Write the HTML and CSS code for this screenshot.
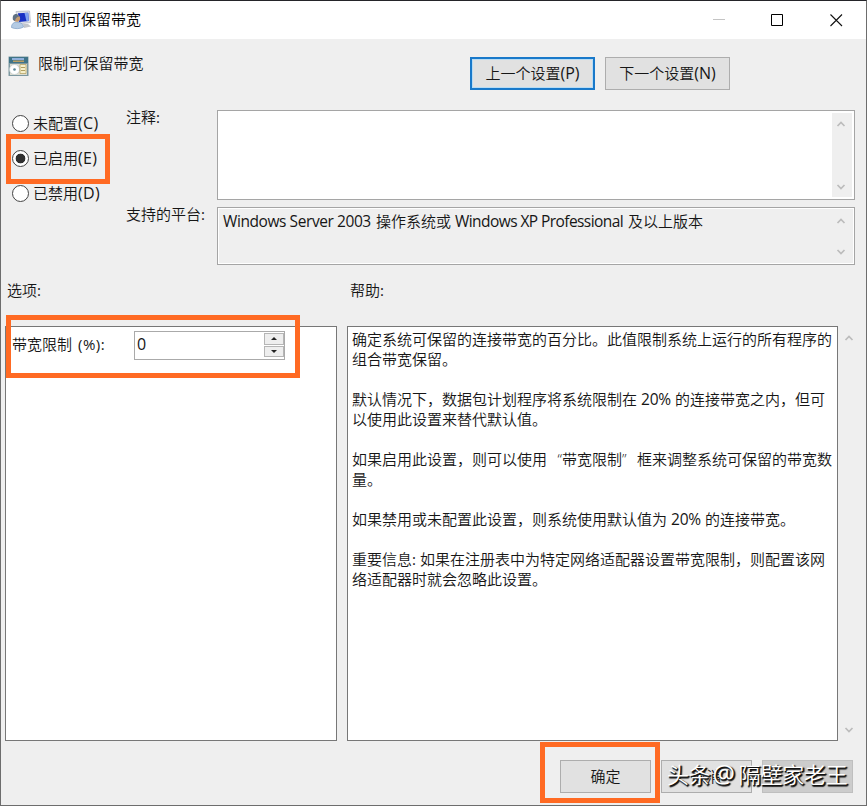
FILE: index.html
```html
<!DOCTYPE html>
<html lang="zh-CN">
<head>
<meta charset="utf-8">
<title>限制可保留带宽</title>
<link rel="stylesheet" href="styles.css">
</head>
<body>
<div class="window">
  <header class="titlebar">
    <svg class="app-icon" width="22" height="20" viewBox="0 0 22 20">
      <path d="M5 1.500 18.500 1 19.500 12.500 7 14Z" fill="#dcdfe6" stroke="#b4bac8" stroke-width=".8"/>
      <path d="M7 3.200 17.200 2.700 17.800 11 8 12Z" fill="#1830c4"/>
      <path d="M13.500 2.900 17.200 2.700 17.800 11 15.500 11.200Z" fill="#7fa2f0"/>
      <path d="M12 14h5l3 2.500-7 1.500Z" fill="#c2c5cb"/>
      <path d="M.5 17.500c0-4 2.500-5.500 5.500-5.500s6 1.500 6.500 5c-3 2-9 2.200-12 .5Z" fill="#b4cbe4" stroke="#7f9fc6" stroke-width=".7"/>
      <circle cx="5.800" cy="8.500" r="3.300" fill="#c49a70"/>
      <path d="M2 10C1 5.500 3 3.500 6 4l2.500 2.500C6 6.500 4.500 8 4 11Z" fill="#5f7183"/>
    </svg>
    <span class="title">限制可保留带宽</span>
    <svg class="controls" width="134" height="14" viewBox="0 0 134 14">
      <path d="M0 6.500h12" stroke="#c4c4c4" fill="none"/>
      <path d="M58.500 1.500h11v11h-11z" stroke="#000" fill="none"/>
      <path d="M117.500 1.500l11.500 11.500M129 1.500l-11.500 11.500" stroke="#111" stroke-width="1.100" fill="none"/>
    </svg>
  </header>

  <section class="heading">
    <svg class="policy-icon" width="21" height="21" viewBox="0 0 21 21">
      <path d="M.5.500h20v19.500H.5z" fill="#7c98a0"/>
      <path d="M1 1h19v6H1z" fill="#3f7488"/>
      <path d="M4 2h12v2H4z" fill="#8fb0dc"/><path d="M5 4.500h11v1.500H5z" fill="#b99e64"/>
      <path d="M2 8h17v11H2z" fill="#dcdcd0"/>
      <circle cx="6.500" cy="13.500" r="5" fill="#fff" stroke="#c4cccc" stroke-width=".7"/>
      <circle cx="6.500" cy="13.500" r="1.300" fill="#5a8796"/>
      <path d="M12 8.500h6v9h-6z" fill="#f5efcb" stroke="#b8a668" stroke-width=".8"/>
      <path d="M13 11.500h4M13 14.500h4" stroke="#a89554" stroke-width=".9"/>
    </svg>
    <span class="policy-name">限制可保留带宽</span>
    <div class="nav">
      <button class="btn nav-btn focused">上一个设置<span class="lat">(P)</span></button>
      <button class="btn nav-btn">下一个设置<span class="lat">(N)</span></button>
    </div>
  </section>

  <section class="settings">
    <div class="radios">
      <label class="radio"><i class="dot"></i>未配置<span class="lat">(C)</span></label>
      <label class="radio"><i class="dot on"></i>已启用<span class="lat">(E)</span></label>
      <label class="radio"><i class="dot"></i>已禁用<span class="lat">(D)</span></label>
    </div>
    <div class="captions">
      <span>注释<span class="lat">:</span></span>
      <span class="platform-caption">支持的平台<span class="lat">:</span></span>
    </div>
    <div class="fields">
      <div class="field comment">
        <div class="field-scroll">
          <svg width="10" height="6" viewBox="0 0 10 6"><path d="M1.500 5 5 1.500 8.500 5"/></svg>
          <svg width="10" height="6" viewBox="0 0 10 6"><path d="M1.500 1 5 4.500 8.500 1"/></svg>
        </div>
      </div>
      <div class="field platform">
        <p class="platform-text"><span class="w1">Windows Server 2003</span><span class="cj">操作系统或</span><span class="w2">Windows XP Professional</span><span>及以上版本</span></p>
        <div class="field-scroll">
          <svg width="10" height="6" viewBox="0 0 10 6"><path d="M1.500 5 5 1.500 8.500 5"/></svg>
          <svg width="10" height="6" viewBox="0 0 10 6"><path d="M1.500 1 5 4.500 8.500 1"/></svg>
        </div>
      </div>
    </div>
  </section>

  <section class="panel-labels">
    <span>选项<span class="lat">:</span></span>
    <span>帮助<span class="lat">:</span></span>
  </section>

  <section class="panels">
    <div class="panel options">
      <span class="option-label">带宽限制<span class="lat pct">(%):</span></span>
      <div class="spinner">
        <span class="lat value">0</span>
        <div class="steps">
          <i><svg width="6" height="3" viewBox="0 0 6 3"><path d="M0 3 3 0 6 3Z"/></svg></i>
          <i><svg width="6" height="3" viewBox="0 0 6 3"><path d="M0 0 3 3 6 0Z"/></svg></i>
        </div>
      </div>
    </div>
    <div class="panel help">
      <p>确定系统可保留的连接带宽的百分比。此值限制系统上运行的所有程序的<br>组合带宽保留。</p>
      <p>默认情况下，数据包计划程序将系统限制在<span class="lat num">20%</span>的连接带宽之内，但可<br>以使用此设置来替代默认值。</p>
      <p>如果启用此设置，则可以使用<span class="q open">“</span>带宽限制<span class="q">”</span>框来调整系统可保留的带宽数<br>量。</p>
      <p>如果禁用或未配置此设置，则系统使用默认值为<span class="lat num">20%</span>的连接带宽。</p>
      <p>重要信息<span class="colon lat">:</span>如果在注册表中为特定网络适配器设置带宽限制，则配置该网<br>络适配器时就会忽略此设置。</p>
    </div>
    <div class="help-scroll">
      <svg width="10" height="6" viewBox="0 0 10 6"><path d="M1.500 5 5 1.500 8.500 5"/></svg>
      <svg width="10" height="6" viewBox="0 0 10 6"><path d="M1.500 1 5 4.500 8.500 1"/></svg>
    </div>
  </section>

  <footer class="footer">
    <button class="btn action">确定</button>
    <button class="btn action">取消</button>
    <button class="btn action disabled"></button>
  </footer>

  <div class="mark mark-radio"></div>
  <div class="mark mark-option"></div>
  <div class="mark mark-ok"></div>
  <div class="watermark"><span>头条</span><span class="at">@</span><span>隔壁家老王</span></div>
</div>
</body>
</html>
```
FILE: styles.css
```css
* { box-sizing: border-box; }
body {
  margin: 0;
  font-family: "Noto Sans CJK SC", sans-serif;
  font-size: 15px;
  line-height: 20px;
  font-weight: 350;
  color: #161616;
}
p { margin: 0; }
.lat { font-family: "Open Sans", "Noto Sans", sans-serif; font-weight: 400; }
.window {
  position: relative;
  width: 867px;
  height: 806px;
  display: flex;
  flex-direction: column;
  overflow: hidden;
  white-space: nowrap;
  background: #efefef;
  border: 1px solid #6d6d6d;
  border-top-color: #242429;
}
.titlebar {
  height: 38px;
  flex: none;
  display: flex;
  align-items: center;
  padding: 0 19px 0 10px;
  background: #fff;
}
.title { margin: -2px 0 0 3px; color: #000; }
.controls { margin-left: auto; }
.heading {
  height: 71px;
  flex: none;
  display: flex;
  align-items: flex-start;
  padding: 17px 0 0 7px;
}
.policy-name { margin: -3px 0 0 9px; letter-spacing: .1px; }
.nav { display: flex; gap: 10px; margin: 1px 0 0 auto; padding-right: 136px; }
.btn {
  font: inherit;
  color: inherit;
  padding: 0 0 2px;
  background: #e1e1e1;
  border: 1px solid #adadad;
}
.nav-btn { width: 125px; height: 33px; }
.nav-btn .lat { font-size: 16px; line-height: 18px; }
.focused { border: 2px solid #1979ca; box-shadow: inset 0 0 0 1px #b8dcf4; }
.settings { height: 155px; flex: none; display: flex; }
.radios { width: 125px; padding: 3px 0 0 11px; }
.radio { display: flex; align-items: center; height: 20px; margin-bottom: 15px; }
.radio .lat { font-size: 16px; letter-spacing: .3px; }
.dot {
  width: 17px;
  height: 17px;
  margin-right: 4px;
  border: 1px solid #444;
  border-radius: 50%;
  background: #fff;
}
.dot.on { background: radial-gradient(circle, #303030 0 4.500px, #fff 5.200px); }
.captions { width: 91px; display: flex; flex-direction: column; }
.captions > span { margin-top: -3px; }
.captions > .platform-caption { margin-top: 77px; }
.fields { width: 638px; display: flex; flex-direction: column; gap: 7px; }
.field {
  display: flex;
  border: 1px solid #a5a5a5;
  background: #fff;
  padding: 2px;
}
.comment { height: 90px; }
.platform { height: 58px; background: #efefef; box-shadow: inset 0 0 0 1px #fff; }
.platform-text { display: flex; padding: 1px 0 0 3px; }
.platform-text .w1, .platform-text .w2 {
  font-family: "Open Sans", sans-serif;
  font-size: 15.500px;
  font-weight: 400;
}
.w1 { width: 153px; letter-spacing: -.42px; }
.cj { width: 79px; }
.w2 { width: 173px; letter-spacing: -.57px; }
.field-scroll {
  width: 20px;
  margin-left: auto;
  display: flex;
  flex-direction: column;
  justify-content: space-between;
  align-items: center;
  padding: 8px 2px 7px 0;
  background: #efefef;
}
.field-scroll path, .help-scroll path { fill: none; stroke: #bcbcbc; stroke-width: 1.700; }
.panel-labels {
  height: 61px;
  flex: none;
  display: grid;
  grid-template-columns: 343px 1fr;
  padding: 15px 0 0 6px;
}
.panels { height: 415px; flex: none; display: flex; padding-left: 4px; }
.panel { background: #fff; border: 1px solid #777; }
.options {
  width: 332px;
  margin-right: 10px;
  display: flex;
  align-items: flex-start;
  padding: 4px 0 0 6px;
}
.option-label { width: 122px; padding-top: 3px; }
.pct { margin-left: 6px; letter-spacing: .5px; }
.spinner {
  width: 151px;
  height: 29px;
  display: flex;
  justify-content: space-between;
  border: 1px solid #aaa;
  padding: 1px 0 2px 2px;
}
.value { padding-top: 1px; font-size: 16px; }
.steps { width: 20px; display: flex; flex-direction: column; gap: 1px; }
.steps i {
  flex: 1;
  display: flex;
  align-items: center;
  justify-content: center;
  border: 1px solid #b5b5b5;
  background: #eee;
}
.steps path { fill: #222; }
.help { width: 491px; padding: 2px 0 0 4px; }
.help p { margin-bottom: 20px; }
.num {
  display: inline-block;
  width: 38px;
  height: 20px;
  vertical-align: top;
  text-align: center;
  font-size: 15.500px;
  letter-spacing: -.2px;
}
.colon { margin-right: 4px; }
.q { display: inline-block; width: 15px; font-family: "Open Sans", sans-serif; }
.q.open { text-align: right; }
.help-scroll {
  width: 21px;
  display: flex;
  flex-direction: column;
  justify-content: space-between;
  align-items: center;
  padding: 9px 0 8px;
}
.footer { display: flex; gap: 10px; padding: 19px 0 0 559px; }
.action { width: 91px; height: 33px; }
.disabled { background: #ccc; border-color: #bfbfbf; }
.mark { position: absolute; border: 5px solid #ff6a23; }
.mark-radio { left: 5px; top: 133px; width: 104px; height: 50px; }
.mark-option { left: 5px; top: 314px; width: 294px; height: 63px; }
.mark-ok { left: 539px; top: 741px; width: 120px; height: 61px; }
.watermark {
  position: absolute;
  left: 666px;
  top: 757px;
  display: flex;
  font-size: 22px;
  line-height: 30px;
  letter-spacing: -.2px;
  color: #fff;
  text-shadow: 1px 1px 0 #111, 2px 1px 1px #222, 1px 2px 1px #222;
}
.at { width: 28px; padding-left: 2px; font-family: "Open Sans", sans-serif; font-size: 25px; font-weight: 400; }
```
